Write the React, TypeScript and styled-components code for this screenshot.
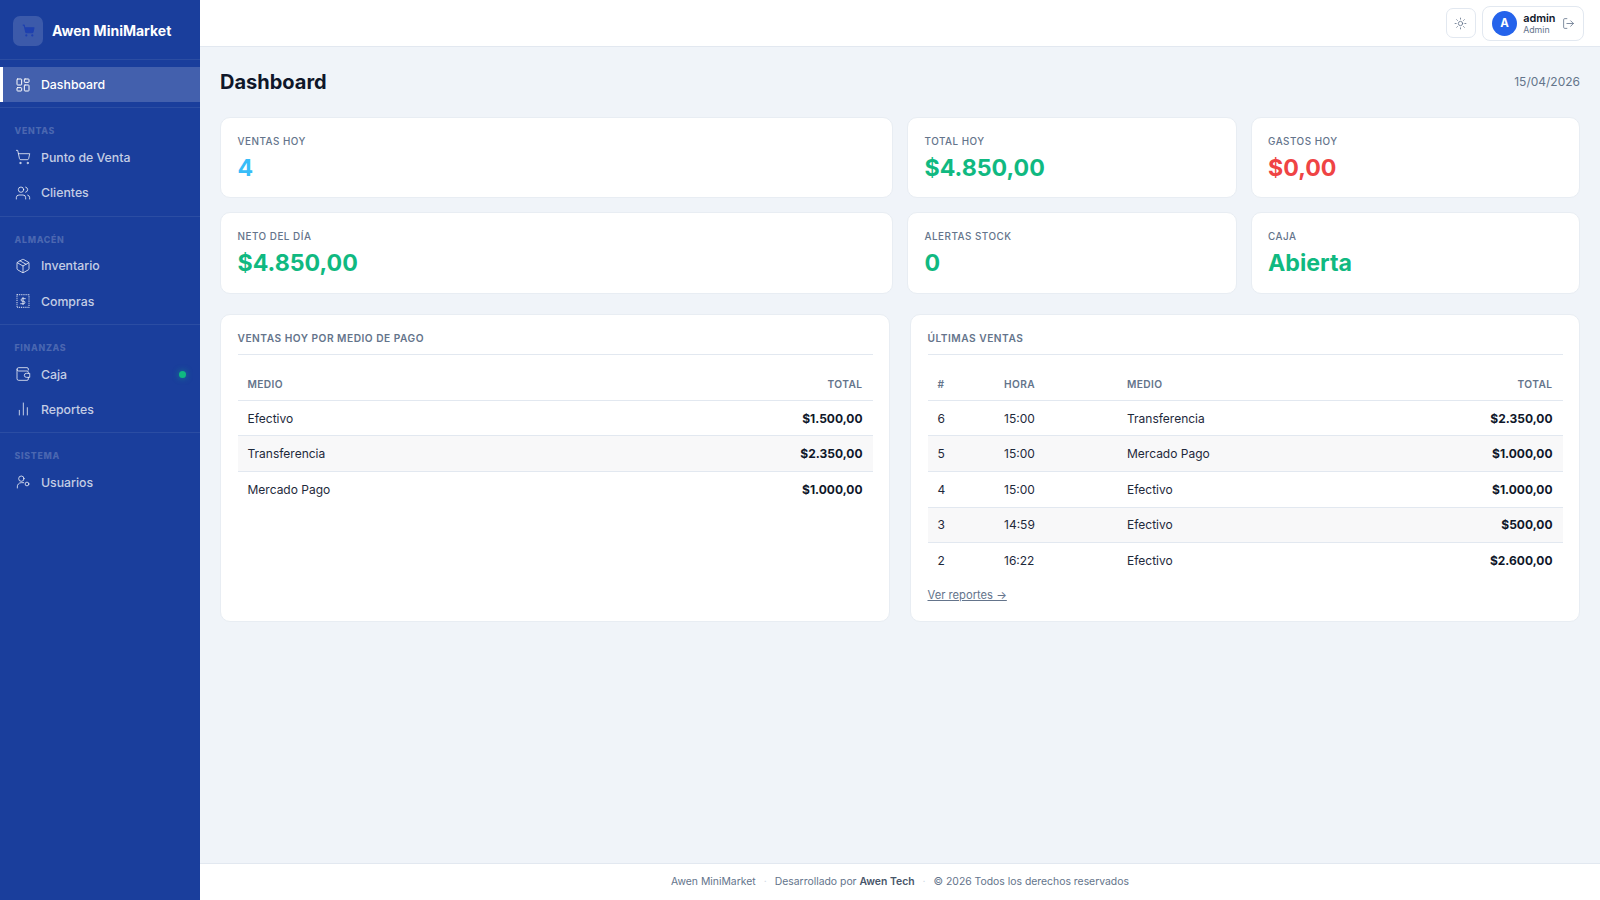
import React from 'react';
import styled, { createGlobalStyle } from 'styled-components';
import { LayoutDashboard, ShoppingCart, Users, Package, Sun, LogOut } from 'lucide-react';

const GlobalStyle = createGlobalStyle`
  * { box-sizing: border-box; }
  html, body { margin: 0; height: 100%; }
  body { font-family: Inter, "Liberation Sans", sans-serif; background: #f0f4f9; color: #0f172a; }
  #root { height: 100%; }
`;

const Shell = styled.div`
  display: flex;
  height: 900px;
  overflow: hidden;
`;

const Sidebar = styled.aside`
  width: 200px;
  flex-shrink: 0;
  background: #1a3e9c;
  display: flex;
  flex-direction: column;
`;

const Brand = styled.div`
  height: 60px;
  padding: 2px 13px 0;
  display: flex;
  align-items: center;
  gap: 9px;
  border-bottom: 1px solid rgba(255, 255, 255, 0.08);
`;

const BrandMark = styled.div`
  width: 30px;
  height: 30px;
  border-radius: 7px;
  background: rgba(255, 255, 255, 0.15);
  color: #1e40af;
  display: flex;
  align-items: center;
  justify-content: center;
`;

const BrandName = styled.span`
  font-size: 14px;
  font-weight: 700;
  color: #fff;
`;

const NavTop = styled.div`
  padding: 7px 0 5px;
  border-bottom: 1px solid rgba(255, 255, 255, 0.08);
`;

const NavSection = styled.div`
  padding: 16px 0 5.2px;
  border-bottom: 1px solid rgba(255, 255, 255, 0.08);

  &:last-child { border-bottom: none; }
`;

const SectionLabel = styled.div`
  padding: 0 14.5px;
  height: 13px;
  margin-bottom: 2.5px;
  line-height: 13px;
  font-size: 8.8px;
  font-weight: 800;
  letter-spacing: 0.7px;
  color: rgba(255, 255, 255, 0.22);
`;

const NavItem = styled.div<{ $active?: boolean }>`
  height: 35.3px;
  display: flex;
  align-items: center;
  gap: 10px;
  padding: 0 14px 0 ${(p) => (p.$active ? '12px' : '15px')};
  font-size: 12.3px;
  font-weight: 500;
  color: ${(p) => (p.$active ? '#fff' : 'rgba(255, 255, 255, 0.75)')};
  background: ${(p) => (p.$active ? 'rgba(255, 255, 255, 0.18)' : 'transparent')};
  border-left: ${(p) => (p.$active ? '3px solid #fff' : 'none')};

  svg { flex-shrink: 0; }
`;

const NavLabel = styled.span`
  flex: 1;
`;

const StatusDot = styled.span`
  width: 7px;
  height: 7px;
  border-radius: 50%;
  background: #10b981;
  box-shadow: 0 0 6px rgba(16, 185, 129, 0.6);
`;

const Body = styled.div`
  flex: 1;
  min-width: 0;
  display: flex;
  flex-direction: column;
`;

const Topbar = styled.header`
  height: 47px;
  flex-shrink: 0;
  background: #fff;
  border-bottom: 1px solid #e2e8f0;
  display: flex;
  align-items: center;
  justify-content: flex-end;
  gap: 6.5px;
  padding: 0 16.5px;
`;

const ThemeButton = styled.button`
  width: 30px;
  height: 30px;
  padding: 0;
  border: 1px solid #e2e8f0;
  border-radius: 7px;
  background: #fff;
  color: #64748b;
  display: flex;
  align-items: center;
  justify-content: center;
`;

const UserChip = styled.div`
  height: 35px;
  border: 1px solid #e2e8f0;
  border-radius: 8px;
  padding: 0 8px 0 9px;
  display: flex;
  align-items: center;
  gap: 6px;
  color: #64748b;
`;

const Avatar = styled.div`
  width: 25px;
  height: 25px;
  border-radius: 50%;
  background: #2563eb;
  color: #fff;
  font-size: 11.5px;
  font-weight: 700;
  display: flex;
  align-items: center;
  justify-content: center;
`;

const UserText = styled.div`
  display: flex;
  flex-direction: column;
`;

const UserName = styled.span`
  font-size: 10.9px;
  font-weight: 600;
  line-height: 12px;
  color: #0f172a;
`;

const UserRole = styled.span`
  font-size: 8.8px;
  line-height: 11px;
  color: #64748b;
`;

const Main = styled.main`
  flex: 1;
  padding: 20px;
  min-height: 0;
`;

const PageHead = styled.div`
  height: 29px;
  margin-bottom: 20.5px;
  display: flex;
  align-items: center;
  justify-content: space-between;
`;

const PageTitle = styled.h1`
  margin: 0;
  font-size: 20px;
  font-weight: 700;
  color: #0f172a;
`;

const PageDate = styled.span`
  font-size: 12px;
  color: #64748b;
`;

const StatsGrid = styled.div`
  display: grid;
  grid-template-columns: repeat(4, 1fr);
  gap: 14px;
  margin-bottom: 20.5px;
`;

const StatCard = styled.div<{ $wide?: boolean }>`
  grid-column: ${(p) => (p.$wide ? 'span 2' : 'span 1')};
  height: 81.5px;
  background: #fff;
  border: 1px solid #e8edf3;
  border-radius: 10px;
  padding: 17.2px 16.5px 0;
`;

const StatLabel = styled.div`
  font-size: 9.9px;
  line-height: 13px;
  font-weight: 500;
  letter-spacing: 0.5px;
  color: #64748b;
`;

const StatValue = styled.div<{ $color: string }>`
  margin-top: 5px;
  font-size: 23.2px;
  line-height: 30px;
  font-weight: 700;
  color: ${(p) => p.$color};
`;

const PanelGrid = styled.div`
  display: grid;
  grid-template-columns: 1fr 1fr;
  gap: 20px;
`;

const Panel = styled.section`
  height: 307.5px;
  background: #fff;
  border: 1px solid #e8edf3;
  border-radius: 10px;
  padding: 16px 16.5px 0;
`;

const PanelTitle = styled.div`
  height: 24px;
  font-size: 10.2px;
  font-weight: 600;
  line-height: 15px;
  letter-spacing: 0.5px;
  color: #64748b;
  border-bottom: 1px solid #e2e8f0;
  margin-bottom: 10px;
`;

const Table = styled.table`
  width: 100%;
  border-collapse: collapse;
  font-size: 12px;
`;

const Th = styled.th<{ $right?: boolean; $width?: string }>`
  height: 35.4px;
  padding: 3px 10px 0;
  font-size: 10.2px;
  font-weight: 600;
  letter-spacing: 0.4px;
  color: #64748b;
  text-align: ${(p) => (p.$right ? 'right' : 'left')};
  width: ${(p) => p.$width || 'auto'};
  border-bottom: 1px solid #e2e8f0;
`;

const Row = styled.tr`
  &:nth-child(even) { background: #f8f8f9; }
`;

const Td = styled.td<{ $right?: boolean; $strong?: boolean }>`
  height: 35.6px;
  padding: 0 10px;
  color: ${(p) => (p.$strong ? '#0f172a' : '#1e293b')};
  text-align: ${(p) => (p.$right ? 'right' : 'left')};
  font-weight: ${(p) => (p.$strong ? 700 : 400)};
  border-bottom: 1px solid #e2e8f0;

  tr:last-child > & { border-bottom: none; }
`;

const ReportLink = styled.a`
  display: block;
  margin-top: 10px;
  font-size: 11.2px;
  line-height: 14px;
  color: #64748b;
  text-decoration: underline;
`;

const Footer = styled.footer`
  height: 37px;
  flex-shrink: 0;
  background: #fff;
  border-top: 1px solid #e2e8f0;
  padding-bottom: 1px;
  display: flex;
  align-items: center;
  justify-content: center;
  gap: 8px;
  font-size: 10.4px;
  color: #64748b;
`;

const FooterDot = styled.span`
  color: #cbd5e1;
`;

const FooterStrong = styled.strong`
  font-weight: 600;
  color: #475569;
`;

const iconProps = { width: 16, height: 16, viewBox: '0 0 24 24', fill: 'none', stroke: 'currentColor', strokeWidth: 1.5, strokeLinecap: 'round' as const, strokeLinejoin: 'round' as const };

const ReceiptIcon = () => (
  <svg {...iconProps}>
    <path d="M3 2.5h18v19H3z" strokeDasharray="1.5 1.3" strokeLinecap="butt" strokeWidth="1.7" />
    <path d="M15.5 8.5h-5a2 2 0 0 0 0 3.8h3a2 2 0 0 1 0 3.8h-5M12 6.5v11" />
  </svg>
);

const WalletIcon = () => (
  <svg {...iconProps}>
    <path d="M20 6V4.5a2 2 0 0 0-2-2H5.5A2.5 2.5 0 0 0 3 5v14a2.5 2.5 0 0 0 2.5 2.5H18a2 2 0 0 0 2-2V17" />
    <path d="M3 5a2.5 2.5 0 0 0 2.5 2.5H18a2 2 0 0 1 2 2V11" />
    <path d="M21.5 11H17a3 3 0 0 0 0 6h4.5z" />
  </svg>
);

const BarsIcon = () => (
  <svg {...iconProps}>
    <path d="M6.5 21v-7M12.5 21V3M18.5 21V10" />
  </svg>
);

const UserGearIcon = () => (
  <svg {...iconProps}>
    <circle cx="9.5" cy="7" r="4" />
    <path d="M3.5 21v-1.5a6 6 0 0 1 6-6.5H13" />
    <circle cx="18" cy="15" r="2.8" />
  </svg>
);

const stats = [
  { label: 'VENTAS HOY', value: '4', color: '#38bdf8', wide: true },
  { label: 'TOTAL HOY', value: '$4.850,00', color: '#10b981' },
  { label: 'GASTOS HOY', value: '$0,00', color: '#ef4444' },
  { label: 'NETO DEL DÍA', value: '$4.850,00', color: '#10b981', wide: true },
  { label: 'ALERTAS STOCK', value: '0', color: '#10b981' },
  { label: 'CAJA', value: 'Abierta', color: '#10b981' },
];

const byMethod = [
  { medio: 'Efectivo', total: '$1.500,00' },
  { medio: 'Transferencia', total: '$2.350,00' },
  { medio: 'Mercado Pago', total: '$1.000,00' },
];

const lastSales = [
  { id: 6, hora: '15:00', medio: 'Transferencia', total: '$2.350,00' },
  { id: 5, hora: '15:00', medio: 'Mercado Pago', total: '$1.000,00' },
  { id: 4, hora: '15:00', medio: 'Efectivo', total: '$1.000,00' },
  { id: 3, hora: '14:59', medio: 'Efectivo', total: '$500,00' },
  { id: 2, hora: '16:22', medio: 'Efectivo', total: '$2.600,00' },
];

export default function App() {
  return (
    <>
      <GlobalStyle />
      <Shell>
        <Sidebar>
          <Brand>
            <BrandMark><ShoppingCart size={13} fill="currentColor" /></BrandMark>
            <BrandName>Awen MiniMarket</BrandName>
          </Brand>
          <NavTop>
            <NavItem $active><LayoutDashboard size={16} strokeWidth={1.5} /><NavLabel>Dashboard</NavLabel></NavItem>
          </NavTop>
          <NavSection>
            <SectionLabel>VENTAS</SectionLabel>
            <NavItem><ShoppingCart size={16} strokeWidth={1.5} /><NavLabel>Punto de Venta</NavLabel></NavItem>
            <NavItem><Users size={16} strokeWidth={1.5} /><NavLabel>Clientes</NavLabel></NavItem>
          </NavSection>
          <NavSection>
            <SectionLabel>ALMACÉN</SectionLabel>
            <NavItem><Package size={16} strokeWidth={1.5} /><NavLabel>Inventario</NavLabel></NavItem>
            <NavItem><ReceiptIcon /><NavLabel>Compras</NavLabel></NavItem>
          </NavSection>
          <NavSection>
            <SectionLabel>FINANZAS</SectionLabel>
            <NavItem><WalletIcon /><NavLabel>Caja</NavLabel><StatusDot /></NavItem>
            <NavItem><BarsIcon /><NavLabel>Reportes</NavLabel></NavItem>
          </NavSection>
          <NavSection>
            <SectionLabel>SISTEMA</SectionLabel>
            <NavItem><UserGearIcon /><NavLabel>Usuarios</NavLabel></NavItem>
          </NavSection>
        </Sidebar>
        <Body>
          <Topbar>
            <ThemeButton><Sun size={13} strokeWidth={1.5} /></ThemeButton>
            <UserChip>
              <Avatar>A</Avatar>
              <UserText>
                <UserName>admin</UserName>
                <UserRole>Admin</UserRole>
              </UserText>
              <LogOut size={13} strokeWidth={1.5} />
            </UserChip>
          </Topbar>
          <Main>
            <PageHead>
              <PageTitle>Dashboard</PageTitle>
              <PageDate>15/04/2026</PageDate>
            </PageHead>
            <StatsGrid>
              {stats.map((s) => (
                <StatCard key={s.label} $wide={s.wide}>
                  <StatLabel>{s.label}</StatLabel>
                  <StatValue $color={s.color}>{s.value}</StatValue>
                </StatCard>
              ))}
            </StatsGrid>
            <PanelGrid>
              <Panel>
                <PanelTitle>VENTAS HOY POR MEDIO DE PAGO</PanelTitle>
                <Table>
                  <thead>
                    <tr><Th>MEDIO</Th><Th $right>TOTAL</Th></tr>
                  </thead>
                  <tbody>
                    {byMethod.map((r) => (
                      <Row key={r.medio}><Td>{r.medio}</Td><Td $right $strong>{r.total}</Td></Row>
                    ))}
                  </tbody>
                </Table>
              </Panel>
              <Panel>
                <PanelTitle>ÚLTIMAS VENTAS</PanelTitle>
                <Table>
                  <thead>
                    <tr><Th $width="66.5px">#</Th><Th $width="123px">HORA</Th><Th>MEDIO</Th><Th $right>TOTAL</Th></tr>
                  </thead>
                  <tbody>
                    {lastSales.map((r) => (
                      <Row key={r.id}><Td>{r.id}</Td><Td>{r.hora}</Td><Td>{r.medio}</Td><Td $right $strong>{r.total}</Td></Row>
                    ))}
                  </tbody>
                </Table>
                <ReportLink>Ver reportes →</ReportLink>
              </Panel>
            </PanelGrid>
          </Main>
          <Footer>
            <span>Awen MiniMarket</span>
            <FooterDot>·</FooterDot>
            <span>Desarrollado por <FooterStrong>Awen Tech</FooterStrong></span>
            <FooterDot>·</FooterDot>
            <span>© 2026 Todos los derechos reservados</span>
          </Footer>
        </Body>
      </Shell>
    </>
  );
}
